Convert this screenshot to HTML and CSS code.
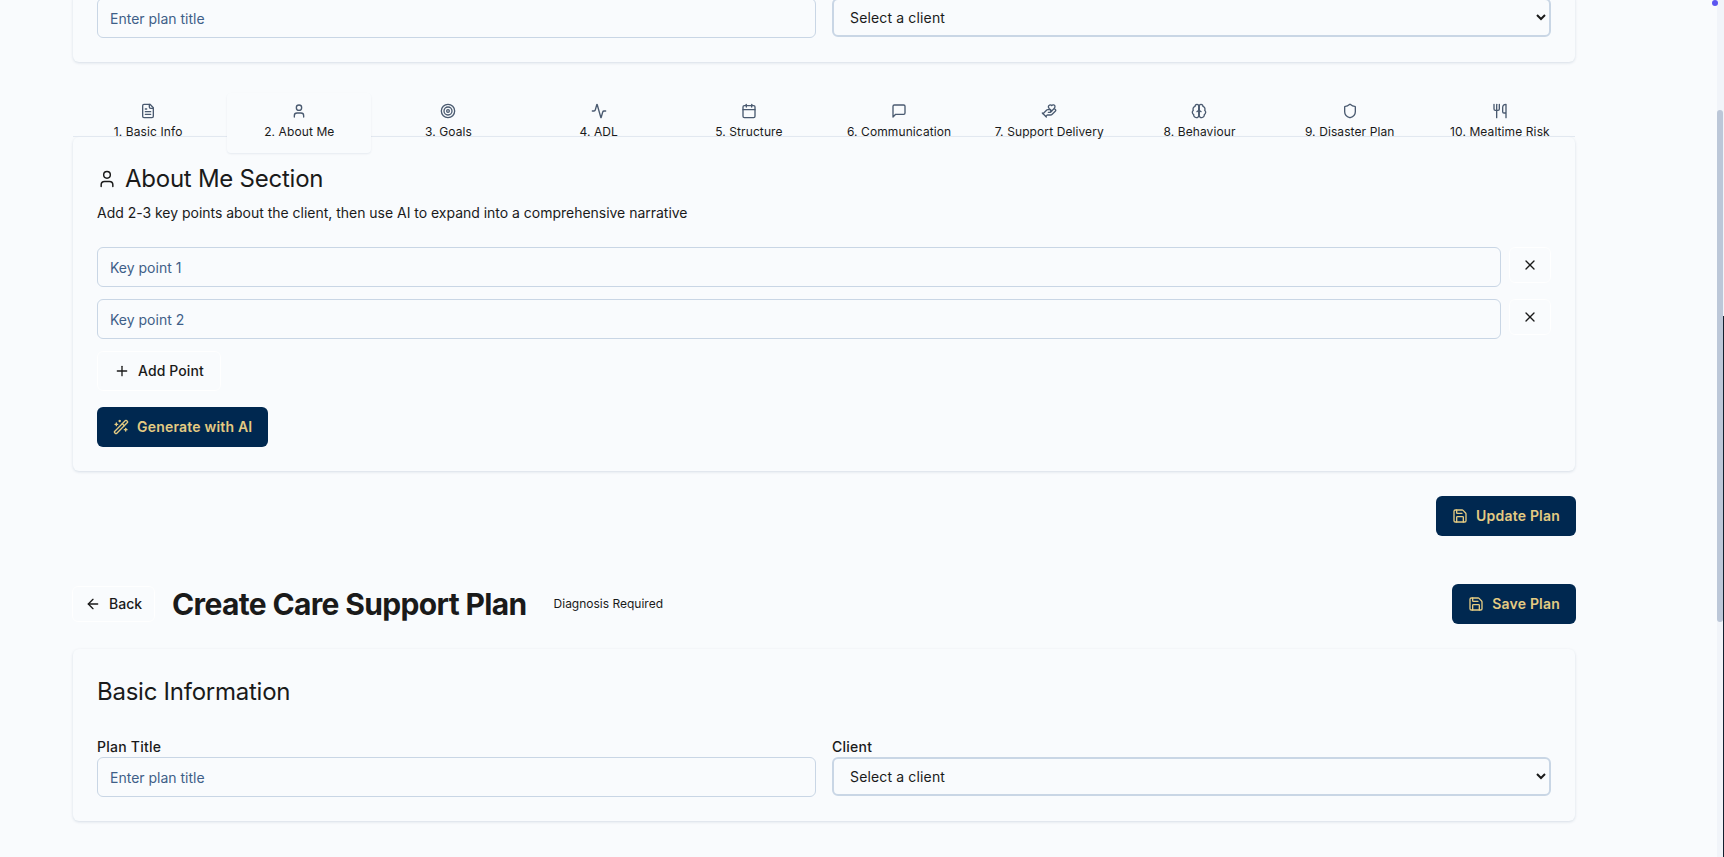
FILE: index.html
```html
<!DOCTYPE html>
<html lang="en">
<head>
  <meta charset="UTF-8">
  <meta name="viewport" content="width=device-width, initial-scale=1.0">
  <title>Create Care Support Plan</title>
  <link rel="stylesheet" href="styles.css">
</head>
<body>
  <div class="window">
    <main class="page">
      <!-- edit form, scrolled partly out of view -->
      <section class="card card-top">
        <div class="field-row">
          <input class="input" type="text" placeholder="Enter plan title">
          <select class="select"><option>Select a client</option></select>
        </div>
      </section>

      <nav class="tabs">
        <a class="tab">
          <svg class="tab-icon" viewBox="0 0 24 24"><path d="M15 2H6a2 2 0 0 0-2 2v16a2 2 0 0 0 2 2h12a2 2 0 0 0 2-2V7Z"/><path d="M14 2v4a2 2 0 0 0 2 2h4"/><path d="M10 9H8"/><path d="M16 13H8"/><path d="M16 17H8"/></svg>
          <span>1. Basic Info</span>
        </a>
        <a class="tab tab-active">
          <svg class="tab-icon" viewBox="0 0 24 24"><path d="M19 21v-2a4 4 0 0 0-4-4H9a4 4 0 0 0-4 4v2"/><circle cx="12" cy="7" r="4"/></svg>
          <span>2. About Me</span>
        </a>
        <a class="tab">
          <svg class="tab-icon" viewBox="0 0 24 24"><circle cx="12" cy="12" r="10"/><circle cx="12" cy="12" r="6"/><circle cx="12" cy="12" r="2"/></svg>
          <span>3. Goals</span>
        </a>
        <a class="tab">
          <svg class="tab-icon" viewBox="0 0 24 24"><path d="M22 12h-2.48a2 2 0 0 0-1.93 1.46l-2.35 8.36a.25.25 0 0 1-.48 0L9.24 2.18a.25.25 0 0 0-.48 0l-2.35 8.36A2 2 0 0 1 4.49 12H2"/></svg>
          <span>4. ADL</span>
        </a>
        <a class="tab">
          <svg class="tab-icon" viewBox="0 0 24 24"><path d="M8 2v4"/><path d="M16 2v4"/><rect x="3" y="4" width="18" height="18" rx="2"/><path d="M3 10h18"/></svg>
          <span>5. Structure</span>
        </a>
        <a class="tab">
          <svg class="tab-icon" viewBox="0 0 24 24"><path d="M21 15a2 2 0 0 1-2 2H7l-4 4V5a2 2 0 0 1 2-2h14a2 2 0 0 1 2 2z"/></svg>
          <span>6. Communication</span>
        </a>
        <a class="tab">
          <svg class="tab-icon" viewBox="0 0 24 24"><path d="M11 14h2a2 2 0 1 0 0-4h-3c-.6 0-1.1.2-1.4.6L3 16"/><path d="m7 20 1.6-1.4c.3-.4.8-.6 1.4-.6h4c1.1 0 2.1-.4 2.8-1.2l4.6-4.4a2 2 0 0 0-2.75-2.91l-4.2 3.9"/><path d="m2 15 6 6"/><path d="M19.5 8.5c.7-.7 1.5-1.6 1.5-2.7A2.73 2.73 0 0 0 16 4a2.78 2.78 0 0 0-5 1.8c0 1.2.8 2 1.5 2.8L16 12"/></svg>
          <span>7. Support Delivery</span>
        </a>
        <a class="tab">
          <svg class="tab-icon" viewBox="0 0 24 24"><path d="M12 5a3 3 0 1 0-5.997.125 4 4 0 0 0-2.526 5.77 4 4 0 0 0 .556 6.588A4 4 0 1 0 12 18Z"/><path d="M12 5a3 3 0 1 1 5.997.125 4 4 0 0 1 2.526 5.77 4 4 0 0 1-.556 6.588A4 4 0 1 1 12 18Z"/><path d="M15 13a4.5 4.5 0 0 1-3-4 4.5 4.5 0 0 1-3 4"/><path d="M12 18V5"/></svg>
          <span>8. Behaviour</span>
        </a>
        <a class="tab">
          <svg class="tab-icon" viewBox="0 0 24 24"><path d="M20 13c0 5-3.5 7.5-7.66 8.95a1 1 0 0 1-.67-.01C7.5 20.5 4 18 4 13V6a1 1 0 0 1 1-1c2 0 4.5-1.2 6.24-2.72a1.17 1.17 0 0 1 1.52 0C14.51 3.81 17 5 19 5a1 1 0 0 1 1 1z"/></svg>
          <span>9. Disaster Plan</span>
        </a>
        <a class="tab">
          <svg class="tab-icon" viewBox="0 0 24 24"><path d="M3 2v7c0 1.1.9 2 2 2h4a2 2 0 0 0 2-2V2"/><path d="M7 2v20"/><path d="M21 15V2a5 5 0 0 0-5 5v6c0 1.1.9 2 2 2h3Zm0 0v7"/></svg>
          <span>10. Mealtime Risk</span>
        </a>
      </nav>

      <section class="card card-about">
        <h2 class="section-title">
          <svg class="title-icon" viewBox="0 0 24 24"><path d="M19 21v-2a4 4 0 0 0-4-4H9a4 4 0 0 0-4 4v2"/><circle cx="12" cy="7" r="4"/></svg>
          About Me Section
        </h2>
        <p class="section-desc">Add 2-3 key points about the client, then use AI to expand into a comprehensive narrative</p>

        <div class="point-row">
          <input class="input" type="text" placeholder="Key point 1">
          <button class="btn-remove"><svg class="btn-icon" viewBox="0 0 24 24"><path d="M18 6 6 18"/><path d="m6 6 12 12"/></svg></button>
        </div>
        <div class="point-row">
          <input class="input" type="text" placeholder="Key point 2">
          <button class="btn-remove"><svg class="btn-icon" viewBox="0 0 24 24"><path d="M18 6 6 18"/><path d="m6 6 12 12"/></svg></button>
        </div>

        <button class="btn btn-outline">
          <svg class="btn-icon" viewBox="0 0 24 24"><path d="M5 12h14"/><path d="M12 5v14"/></svg>
          <span class="btn-label">Add Point</span>
        </button>
        <button class="btn btn-primary btn-generate">
          <svg class="btn-icon" viewBox="0 0 24 24"><path d="m21.64 3.64-1.28-1.28a1.21 1.21 0 0 0-1.72 0L2.36 18.64a1.21 1.21 0 0 0 0 1.72l1.28 1.28a1.2 1.2 0 0 0 1.72 0L21.64 5.36a1.2 1.2 0 0 0 0-1.72"/><path d="m14 7 3 3"/><path d="M5 6v4"/><path d="M19 14v4"/><path d="M10 2v2"/><path d="M7 8H3"/><path d="M21 16h-4"/><path d="M11 3H9"/></svg>
          <span class="btn-label">Generate with AI</span>
        </button>
      </section>

      <div class="actions">
        <button class="btn btn-primary">
          <svg class="btn-icon" viewBox="0 0 24 24"><path d="M15.2 3a2 2 0 0 1 1.4.6l3.8 3.8a2 2 0 0 1 .6 1.4V19a2 2 0 0 1-2 2H5a2 2 0 0 1-2-2V5a2 2 0 0 1 2-2z"/><path d="M17 21v-7a1 1 0 0 0-1-1H8a1 1 0 0 0-1 1v7"/><path d="M7 3v4a1 1 0 0 0 1 1h7"/></svg>
          <span class="btn-label">Update Plan</span>
        </button>
      </div>

      <header class="plan-header">
        <button class="btn-back">
          <svg class="btn-icon" viewBox="0 0 24 24"><path d="m12 19-7-7 7-7"/><path d="M19 12H5"/></svg>
          <span class="btn-label">Back</span>
        </button>
        <h1 class="plan-title">Create Care Support Plan</h1>
        <span class="badge">Diagnosis Required</span>
        <button class="btn btn-primary btn-save">
          <svg class="btn-icon" viewBox="0 0 24 24"><path d="M15.2 3a2 2 0 0 1 1.4.6l3.8 3.8a2 2 0 0 1 .6 1.4V19a2 2 0 0 1-2 2H5a2 2 0 0 1-2-2V5a2 2 0 0 1 2-2z"/><path d="M17 21v-7a1 1 0 0 0-1-1H8a1 1 0 0 0-1 1v7"/><path d="M7 3v4a1 1 0 0 0 1 1h7"/></svg>
          <span class="btn-label">Save Plan</span>
        </button>
      </header>

      <section class="card card-basic">
        <h2 class="section-title">Basic Information</h2>
        <div class="field-row">
          <div class="field">
            <label class="field-label">Plan Title</label>
            <input class="input" type="text" placeholder="Enter plan title">
          </div>
          <div class="field">
            <label class="field-label">Client</label>
            <select class="select"><option>Select a client</option></select>
          </div>
        </div>
      </section>
    </main>

    <div class="scrollbar"><div class="scrollbar-thumb"></div></div>
    <span class="scrollbar-edge"></span>
    <span class="dot"></span>
  </div>
</body>
</html>
```

FILE: styles.css
```css
* {
  box-sizing: border-box;
}
html, body {
  margin: 0;
  height: 100%;
  overflow: hidden;
}
body {
  background-color: #f9fbfd;
  color: #1a1a1a;
  font-family: Inter, "Liberation Sans", sans-serif;
  font-size: 14px;
}
button, input, select {
  font-family: inherit;
}
svg {
  fill: none;
  stroke: currentColor;
  stroke-width: 2;
  stroke-linecap: round;
  stroke-linejoin: round;
  flex-shrink: 0;
}

.window {
  position: relative;
  display: flex;
  height: 857px;
  overflow: hidden;
}
.page {
  flex: 1;
  min-width: 0;
  padding: 0 142px 0 73px;
  margin-top: -2px;
}
.scrollbar {
  width: 7px;
  background-color: #f1f4f9;
  padding-top: 110px;
}
.scrollbar-thumb {
  width: 6px;
  height: 512px;
  background-color: #bcc7d8;
  border-radius: 3px;
}
.scrollbar-edge {
  position: absolute;
  top: 316px;
  right: 0;
  bottom: 0;
  width: 1px;
  background-color: #14202e;
}
.dot {
  position: absolute;
  top: 0;
  right: 6px;
  width: 6px;
  height: 6px;
  border-radius: 50%;
  background-color: #5b55f0;
}

.card {
  background-color: #f9fbfd;
  border-radius: 6px;
  box-shadow: 0 1px 3px rgba(0, 40, 90, 0.14);
  padding: 24px;
}
.card-top {
  padding-top: 0;
  height: 64px;
  border-radius: 0 0 6px 6px;
}
.card-about {
  height: 334px;
  padding-top: 28px;
}
.card-basic {
  height: 172px;
  margin-top: 25px;
  padding-top: 29px;
}

.field-row {
  display: grid;
  grid-template-columns: 1fr 1fr;
  gap: 16px;
  align-items: start;
}
.card-basic .field-row {
  margin-top: 32px;
}
.field {
  display: flex;
  flex-direction: column;
}
.field-label {
  font-size: 14px;
  font-weight: 500;
  line-height: 17px;
  margin-bottom: 2px;
  letter-spacing: 0.25px;
}
.input {
  display: block;
  width: 100%;
  height: 40px;
  padding: 0 12px;
  background-color: #f9fbfd;
  border: 1px solid #c9d6e5;
  border-radius: 6px;
  font-size: 14px;
  color: #1a1a1a;
}
.input::placeholder {
  color: #3f5f88;
  opacity: 1;
}
.select {
  display: block;
  width: 100%;
  height: 39px;
  padding: 0 12px;
  background-color: #f9fbfd;
  border: 2px solid #c9d6e5;
  border-radius: 6px;
  font-size: 14px;
  letter-spacing: 0.15px;
  color: #1a1a1a;
}

.tabs {
  position: relative;
  z-index: 1;
  display: grid;
  grid-template-columns: repeat(10, 1fr);
  gap: 4px;
  height: 44px;
  margin-top: 31px;
  padding: 0 2px;
  border-bottom: 1px solid #e2e8f0;
}
.tab {
  display: flex;
  flex-direction: column;
  align-items: center;
  gap: 5px;
  height: 60px;
  padding-top: 10px;
  font-size: 12px;
  line-height: 16px;
  letter-spacing: 0.1px;
  white-space: nowrap;
}
.tab-icon {
  width: 16px;
  height: 16px;
  color: #4a5a70;
}
.tab-active {
  margin-left: 2px;
  background-color: #f9fbfd;
  border-radius: 4px;
  box-shadow: 0 1px 2px rgba(0, 40, 90, 0.08);
}

.section-title {
  display: flex;
  align-items: center;
  gap: 8px;
  margin: 0;
  font-size: 24px;
  font-weight: 400;
  line-height: 28px;
  letter-spacing: -0.25px;
}
.title-icon {
  width: 20px;
  height: 20px;
  stroke-width: 1.75;
}
.section-desc {
  margin: 10px 0 0;
  font-size: 14px;
  line-height: 20px;
  letter-spacing: -0.02px;
}

.point-row {
  display: flex;
  gap: 8px;
  margin-bottom: 12px;
}
.section-desc + .point-row {
  margin-top: 24px;
}
.btn-remove {
  flex: none;
  display: flex;
  align-items: center;
  justify-content: center;
  width: 42px;
  height: 36px;
  padding: 0;
  background-color: #f9fbfd;
  border: 1px solid #ffffff;
  border-radius: 6px;
  color: #1a1a1a;
}

.btn {
  display: inline-flex;
  align-items: center;
  justify-content: center;
  gap: 8px;
  height: 40px;
  padding: 0 16px;
  border-radius: 6px;
  border: none;
  font-size: 14px;
  font-weight: 500;
  white-space: nowrap;
}
.btn-icon {
  width: 16px;
  height: 16px;
}
.btn-label {
  margin-bottom: 2px;
}
.btn-outline {
  display: flex;
  background-color: #f9fbfd;
  border: 1px solid #ffffff;
  color: #1a1a1a;
  letter-spacing: 0.1px;
}
.btn-primary {
  background-color: #002850;
  color: #e4cb82;
  font-weight: 600;
  letter-spacing: 0.2px;
}
.btn-generate {
  margin-top: 16px;
}

.actions {
  display: flex;
  justify-content: flex-end;
  margin: 25px -1px 0 0;
}

.plan-header {
  display: flex;
  align-items: center;
  margin: 48px -1px 0 0;
}
.btn-back {
  display: inline-flex;
  align-items: center;
  gap: 8px;
  height: 36px;
  margin-left: -1px;
  padding: 0 12px;
  background-color: #f9fbfd;
  border: 1px solid #ffffff;
  border-radius: 6px;
  font-size: 14px;
  font-weight: 500;
  color: #1a1a1a;
}
.plan-title {
  margin: 0 0 0 17px;
  font-size: 30px;
  font-weight: 700;
  line-height: 36px;
  letter-spacing: -0.65px;
}
.badge {
  margin-left: 27px;
  font-size: 12px;
  line-height: 16px;
}
.btn-save {
  margin-left: auto;
}
```
